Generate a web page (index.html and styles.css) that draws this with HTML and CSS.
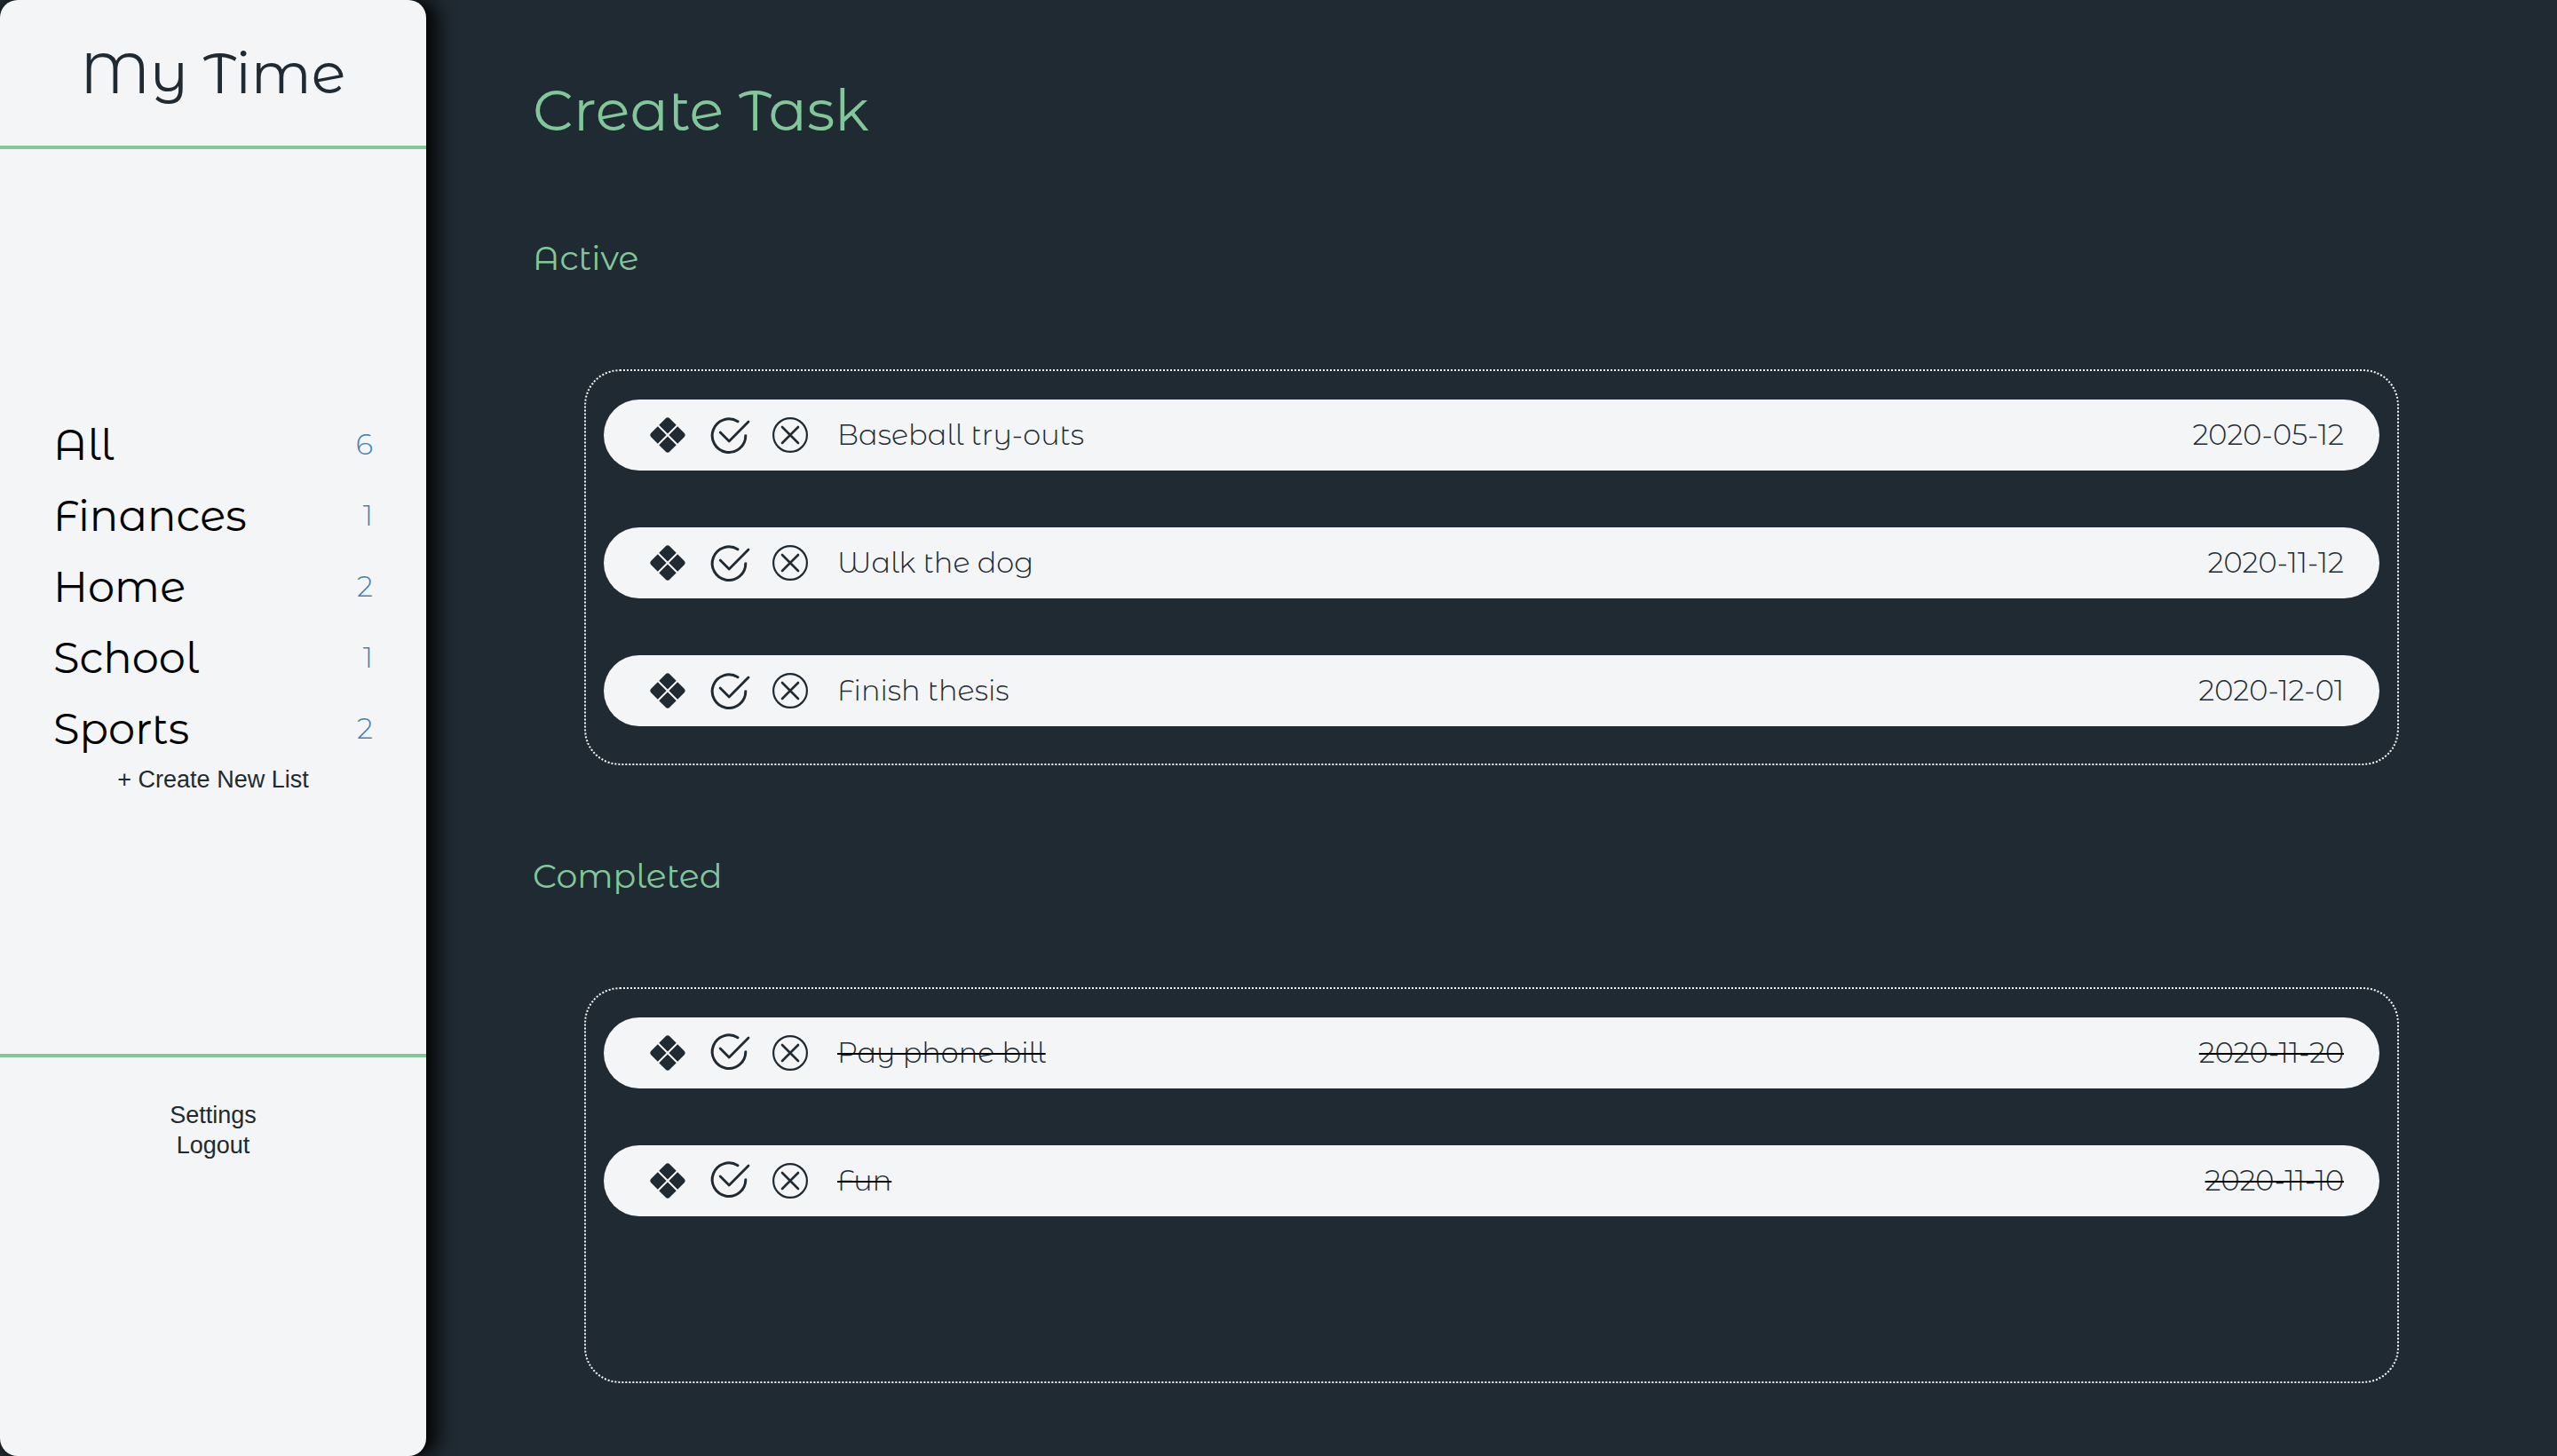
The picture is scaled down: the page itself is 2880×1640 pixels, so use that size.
FILE: index.html
```html
<!DOCTYPE html>
<html lang="en">
<head>
<meta charset="utf-8">
<meta name="viewport" content="width=device-width, initial-scale=1">
<title>My Time</title>
<link rel="stylesheet" href="styles.css">
</head>
<body>
<svg class="sprite" aria-hidden="true">
  <symbol id="grip" viewBox="0 0 40 40">
    <g transform="rotate(45 20 20)" fill="currentColor">
      <path d="M19 5.200V19H5.200V8.700a3.500 3.500 0 0 1 3.500-3.500z"/>
      <path d="M21 5.200V19H34.800V8.700a3.500 3.500 0 0 0-3.500-3.500z"/>
      <path d="M19 34.800V21H5.200V31.300a3.500 3.500 0 0 0 3.500 3.500z"/>
      <path d="M21 34.800V21H34.800V31.300a3.500 3.500 0 0 1-3.500 3.500z"/>
    </g>
  </symbol>
  <symbol id="check" viewBox="0 0 40 40" overflow="visible">
    <g fill="none" stroke="currentColor" stroke-width="3" stroke-linecap="round" stroke-linejoin="round">
      <path d="M30 4.800A18.800 18.800 0 1 0 38.800 20.700"/>
      <path d="M10.200 16.900L20.200 27L42 4.900" stroke-width="2.800"/>
    </g>
  </symbol>
  <symbol id="cross" viewBox="0 0 40 40">
    <g fill="none" stroke="currentColor" stroke-linecap="round">
      <circle cx="20" cy="20" r="18.900" stroke-width="2.200"/>
      <path d="M11 11L29 29M29 11L11 29" stroke-width="2.600"/>
    </g>
  </symbol>
</svg>

<div class="app">
  <aside class="sidebar">
    <header class="brand">My Time</header>
    <nav class="lists" aria-label="Lists">
      <ul class="list-links">
        <li><a href="#all"><span>All</span><span class="count">6</span></a></li>
        <li><a href="#finances"><span>Finances</span><span class="count">1</span></a></li>
        <li><a href="#home"><span>Home</span><span class="count">2</span></a></li>
        <li><a href="#school"><span>School</span><span class="count">1</span></a></li>
        <li><a href="#sports"><span>Sports</span><span class="count">2</span></a></li>
      </ul>
      <button class="text-button" type="button">+ Create New List</button>
    </nav>
    <footer class="account">
      <button class="text-button" type="button">Settings</button>
      <button class="text-button" type="button">Logout</button>
    </footer>
  </aside>

  <main class="main">
    <h1><a href="#create">Create Task</a></h1>

    <section class="group">
      <h2>Active</h2>
      <ul class="tasks">
        <li class="task">
          <button type="button" aria-label="Move"><svg class="icon"><use href="#grip"/></svg></button>
          <button type="button" aria-label="Complete"><svg class="icon icon-check"><use href="#check"/></svg></button>
          <button type="button" aria-label="Delete"><svg class="icon"><use href="#cross"/></svg></button>
          <span class="name">Baseball try-outs</span>
          <time class="date">2020-05-12</time>
        </li>
        <li class="task">
          <button type="button" aria-label="Move"><svg class="icon"><use href="#grip"/></svg></button>
          <button type="button" aria-label="Complete"><svg class="icon icon-check"><use href="#check"/></svg></button>
          <button type="button" aria-label="Delete"><svg class="icon"><use href="#cross"/></svg></button>
          <span class="name">Walk the dog</span>
          <time class="date">2020-11-12</time>
        </li>
        <li class="task">
          <button type="button" aria-label="Move"><svg class="icon"><use href="#grip"/></svg></button>
          <button type="button" aria-label="Complete"><svg class="icon icon-check"><use href="#check"/></svg></button>
          <button type="button" aria-label="Delete"><svg class="icon"><use href="#cross"/></svg></button>
          <span class="name">Finish thesis</span>
          <time class="date">2020-12-01</time>
        </li>
      </ul>
    </section>

    <section class="group">
      <h2>Completed</h2>
      <ul class="tasks">
        <li class="task done">
          <button type="button" aria-label="Move"><svg class="icon"><use href="#grip"/></svg></button>
          <button type="button" aria-label="Reopen"><svg class="icon icon-check"><use href="#check"/></svg></button>
          <button type="button" aria-label="Delete"><svg class="icon"><use href="#cross"/></svg></button>
          <span class="name">Pay phone bill</span>
          <time class="date">2020-11-20</time>
        </li>
        <li class="task done">
          <button type="button" aria-label="Move"><svg class="icon"><use href="#grip"/></svg></button>
          <button type="button" aria-label="Reopen"><svg class="icon icon-check"><use href="#check"/></svg></button>
          <button type="button" aria-label="Delete"><svg class="icon"><use href="#cross"/></svg></button>
          <span class="name">Fun</span>
          <time class="date">2020-11-10</time>
        </li>
      </ul>
    </section>
  </main>
</div>
</body>
</html>
```
FILE: styles.css
```css
:root {
  --dark: #202a32;
  --light: #f4f5f7;
  --green: #81c799;
  --blue: #4682b4;
}

* {
  box-sizing: border-box;
}

body {
  margin: 0;
  background: var(--dark);
  color: var(--dark);
  font-family: "Montserrat Alternates", Inter, sans-serif;
}

ul {
  margin: 0;
  padding: 0;
  list-style: none;
}

a {
  color: inherit;
  text-decoration: none;
}

button {
  margin: 0;
  padding: 0;
  border: 0;
  background: none;
  color: inherit;
  cursor: pointer;
}

.sprite {
  display: none;
}

.app {
  display: grid;
  grid-template-columns: 1fr 5fr;
  min-height: 100vh;
}

/* Sidebar */

.sidebar {
  display: grid;
  grid-template-rows: auto 9fr 4fr;
  border-radius: 20px;
  background: var(--light);
  box-shadow: 14px 0 20px rgba(0, 0, 0, 0.8), 0 0 8px rgba(0, 0, 0, 0.5);
}

.brand {
  padding: 42px 0;
  border-bottom: 4px solid var(--green);
  font-size: 64px;
  line-height: 80px;
  text-align: center;
}

.lists {
  display: flex;
  flex-direction: column;
  justify-content: center;
  padding: 0 60px;
}

.list-links a {
  display: flex;
  align-items: center;
  justify-content: space-between;
  color: #000;
  font-size: 48px;
  line-height: 80px;
}

.list-links .count {
  color: var(--blue);
  font-size: 32px;
  font-weight: 300;
}

.text-button {
  font: 27px/34px Arial, "Liberation Sans", sans-serif;
}

.account {
  display: flex;
  flex-direction: column;
  align-items: center;
  padding: 48px 0;
  border-top: 4px solid var(--green);
}

/* Main */

.main {
  padding: 84px 120px 80px;
  color: var(--green);
}

h1,
h2 {
  margin: 0;
  font-weight: 400;
}

h1 {
  padding-bottom: 2px;
  font-size: 64px;
  line-height: 80px;
}

h2 {
  font-size: 38px;
  line-height: 48px;
}

.group {
  margin-top: 101px;
}

.tasks {
  display: flex;
  flex-direction: column;
  gap: 64px;
  min-height: 446px;
  margin: 101px 58px 0;
  padding: 32px 20px 42px;
  border: 2px dotted var(--light);
  border-radius: 40px;
}

.task {
  display: flex;
  align-items: center;
  gap: 29px;
  height: 80px;
  padding: 0 40px 0 52px;
  border-radius: 40px;
  background: var(--light);
  color: var(--dark);
  font-size: 32px;
  font-weight: 300;
}

.task button {
  width: 40px;
  height: 40px;
}

.icon {
  display: block;
  width: 40px;
  height: 40px;
  overflow: visible;
}

.done .icon-check {
  margin-top: -4px;
}

.name,
.date {
  padding-bottom: 2px;
}

.name {
  padding-left: 4px;
}

.date {
  margin-left: auto;
}

.done .name,
.done .date {
  text-decoration: line-through 2px #000;
}
```
